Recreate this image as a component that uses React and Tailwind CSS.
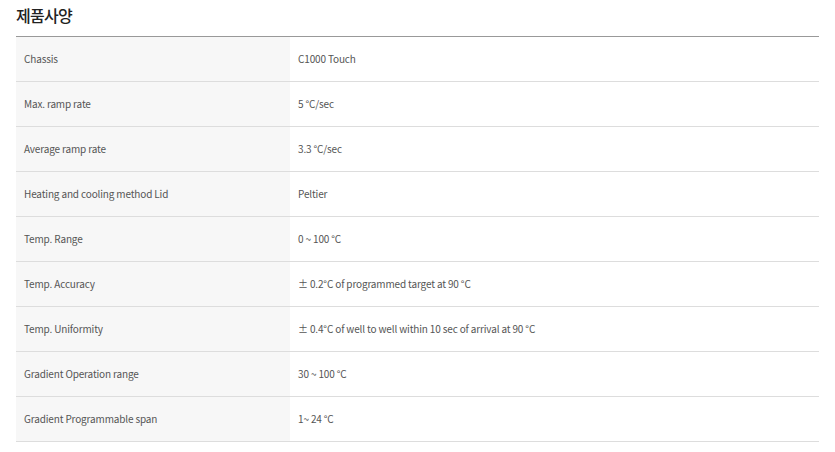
const specs = [
  ['Chassis', 'C1000 Touch'],
  ['Max. ramp rate', '5 °C/sec'],
  ['Average ramp rate', '3.3 °C/sec'],
  ['Heating and cooling method Lid', 'Peltier'],
  ['Temp. Range', '0 ~ 100 °C'],
  ['Temp. Accuracy', '± 0.2°C of programmed target at 90 °C'],
  ['Temp. Uniformity', '± 0.4°C of well to well within 10 sec of arrival at 90 °C'],
  ['Gradient Operation range', '30 ~ 100 °C'],
  ['Gradient Programmable span', '1~ 24 °C'],
];

const App = () => {
  return (
    <div className="min-h-screen bg-white px-4 pt-[2px] font-['Noto_Sans_CJK_KR',sans-serif]">
      <h2 className="text-[16px] font-medium text-[#222] leading-[26px] tracking-[-0.75px]">제품사양</h2>
      <table className="mt-[8px] w-full border-collapse border-t border-[#999] text-[10px] tracking-[-0.15px] text-[#555]">
        <tbody>
          {specs.map(([label, value]) => (
            <tr key={label} className="h-[45px] border-b border-[#ddd]">
              <td className="w-[274px] bg-[#f7f7f7] px-2 pb-[2px] align-middle">{label}</td>
              <td className="px-2 pb-[2px] align-middle">{value}</td>
            </tr>
          ))}
        </tbody>
      </table>
    </div>
  );
};

export default App;
